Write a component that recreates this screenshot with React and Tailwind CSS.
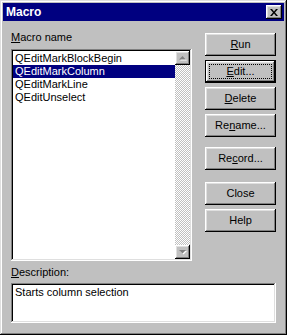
import React from 'react';

const raised = 'shadow-[inset_-1px_-1px_#000,inset_1px_1px_#fff,inset_-2px_-2px_#808080,inset_2px_2px_#dfdfdf]';
const sunken = 'shadow-[inset_-1px_-1px_#fff,inset_1px_1px_#808080,inset_-2px_-2px_#dfdfdf,inset_2px_2px_#000]';

const macros = ['QEditMarkBlockBegin', 'QEditMarkColumn', 'QEditMarkLine', 'QEditUnselect'];

const Btn = ({ children, focused = false, className = '' }) => (
  <div
    className={`w-[71px] h-[23px] bg-[#c0c0c0] flex items-center justify-center text-black ${
      focused
        ? 'p-[4px] shadow-[inset_0_0_0_1px_#000,inset_-2px_-2px_#000,inset_2px_2px_#fff,inset_-3px_-3px_#808080,inset_3px_3px_#dfdfdf]'
        : raised
    } ${className}`}
  >
    {focused ? (
      <span className="flex-1 self-stretch flex items-center justify-center border border-dotted border-black">
        {children}
      </span>
    ) : (
      children
    )}
  </div>
);

const Arrow = ({ down = false }) => (
  <div className={`h-[14px] bg-[#c0c0c0] flex items-center justify-center ${raised}`}>
    <svg width="8" height="5" viewBox="0 0 8 5">
      {down ? (
        <>
          <path d="M1 1h7L4.5 4.5z" fill="#fff" />
          <path d="M0 0h7L3.5 3.5z" fill="#808080" />
        </>
      ) : (
        <>
          <path d="M1 4.5h7L4.5 1z" fill="#fff" />
          <path d="M0 3.5h7L3.5 0z" fill="#808080" />
        </>
      )}
    </svg>
  </div>
);

export default function App() {
  return (
    <div
      className="w-[287px] h-[335px] bg-[#c0c0c0] p-[3px] flex flex-col text-[11px] leading-[13px] text-black shadow-[inset_-1px_-1px_#000,inset_1px_1px_#dfdfdf,inset_-2px_-2px_#808080,inset_2px_2px_#fff]"
      style={{ fontFamily: '"Liberation Sans", Arial, sans-serif' }}
    >
      <div className="h-[18px] bg-[#000080] flex items-center justify-between pl-[3px] pr-[2px]">
        <span className="text-white font-bold text-[12px]">Macro</span>
        <div className={`w-[16px] h-[14px] bg-[#c0c0c0] flex items-center justify-center ${raised}`}>
          <svg width="8" height="7" viewBox="0 0 8 7">
            <path d="M0 0h2l2 2.5L6 0h2L5 3.5 8 7H6L4 4.5 2 7H0l3-3.5z" fill="#000" />
          </svg>
        </div>
      </div>

      <div className="flex-1 flex flex-col px-[8px]">
        <div className="flex justify-between">
          <div className="flex flex-col w-[181px]">
            <div className="mt-[10px]">
              <span className="underline">M</span>acro name
            </div>
            <div className={`mt-[5px] h-[212px] bg-white p-[2px] flex ${sunken}`}>
              <div className="flex-1 pt-[1px] flex flex-col">
                {macros.map((m, i) => (
                  <div
                    key={m}
                    className={`h-[13px] pl-[2px] ${i === 1 ? 'bg-[#000080] text-white' : ''}`}
                  >
                    {m}
                  </div>
                ))}
              </div>
              <div className="w-[15px] flex flex-col">
                <Arrow />
                <div className="flex-1 bg-[repeating-conic-gradient(#c0c0c0_0%_25%,#ffffff_0%_50%)] bg-[length:2px_2px]" />
                <Arrow down />
              </div>
            </div>
          </div>

          <div className="flex flex-col mt-[12px]">
            <Btn>
              <span><span className="underline">R</span>un</span>
            </Btn>
            <Btn focused className="mt-[4px]">
              <span><span className="underline">E</span>dit...</span>
            </Btn>
            <Btn className="mt-[4px]">
              <span><span className="underline">D</span>elete</span>
            </Btn>
            <Btn className="mt-[4px]">
              <span>Re<span className="underline">n</span>ame...</span>
            </Btn>
            <Btn className="mt-[10px]">
              <span>Re<span className="underline">c</span>ord...</span>
            </Btn>
            <Btn className="mt-[12px]">Close</Btn>
            <Btn className="mt-[4px]">Help</Btn>
          </div>
        </div>

        <div className="mt-[5px]">
          <span className="underline">D</span>escription:
        </div>
        <div className={`mt-[4px] h-[40px] bg-white px-[4px] pt-[3px] ${sunken}`}>
          Starts column selection
        </div>
      </div>
    </div>
  );
}
